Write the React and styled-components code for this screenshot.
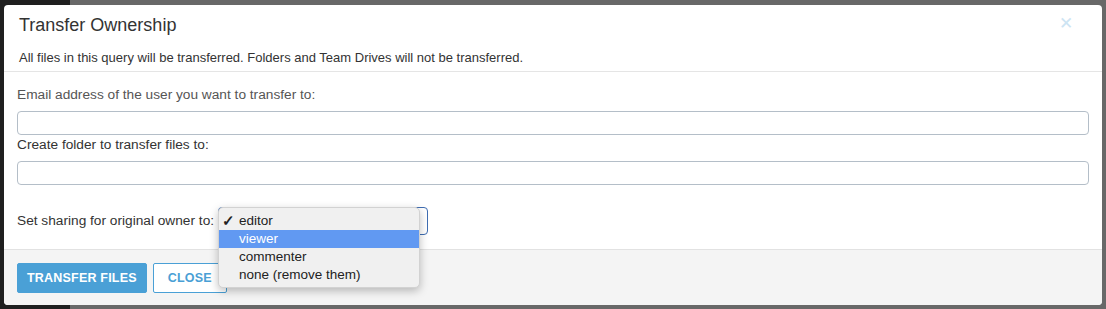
import React from 'react'
import styled, { createGlobalStyle } from 'styled-components'

const GlobalStyle = createGlobalStyle`
    html, body {
        margin: 0;
        padding: 0;
        height: 309px;
        overflow: hidden;
        font-family: 'Liberation Sans', Arial, sans-serif;
        background: linear-gradient(to right, #1f1f1f 0 70px, #686868 70px);
    }
    * { box-sizing: border-box; }
`;

const Backdrop = styled.div`
    width: 1106px;
    height: 309px;
    padding: 5px 4px 4px 4px;
`;

const Modal = styled.div`
    width: 1098px;
    height: 300px;
    background: #fff;
    border-radius: 4px;
    display: flex;
    flex-direction: column;
    position: relative;
`;

const Header = styled.div`
    padding: 9px 15px 0 15px;
    height: 67px;
    border-bottom: 1px solid #e5e5e5;
    position: relative;
`;

const Title = styled.h4`
    margin: 0;
    font-size: 18px;
    font-weight: 400;
    color: #333;
    line-height: 22px;
`;

const Note = styled.p`
    margin: 12px 0 0 0;
    font-size: 13px;
    color: #333;
    line-height: 20px;
`;

const CloseX = styled.button`
    position: absolute;
    top: 8px;
    right: 29px;
    border: 0;
    background: none;
    color: #cde4f3;
    font-size: 17px;
    padding: 0;
    font-family: 'Liberation Sans', Arial, sans-serif;
`;

const Body = styled.div`
    flex: 1;
    padding: 13px 13px 0 13px;
    display: flex;
    flex-direction: column;
`;

const Label = styled.label`
    font-size: 13.7px;
    line-height: 20px;
    color: ${p => p.muted ? '#555' : '#333'};
    margin-bottom: ${p => p.gap}px;
`;

const Input = styled.div`
    height: 24px;
    width: 1072px;
    border: 1px solid #b4bec8;
    border-radius: 4px;
`;

const SelectRow = styled.div`
    display: flex;
    align-items: center;
    margin-top: 22px;
    position: relative;
`;

const SelectBox = styled.div`
    margin-left: 4px;
    width: 210px;
    height: 28px;
    border: 1.5px solid #3f6db2;
    border-radius: 4px;
`;

const Menu = styled.ul`
    position: absolute;
    left: 201px;
    top: 0;
    width: 202px;
    margin: 0;
    padding: 4px 0 3px 0;
    list-style: none;
    background: #f0f0f0;
    border-radius: 5px;
    border: 1px solid #d2d2d2;
    box-shadow: 0 3px 8px rgba(0, 0, 0, 0.25);
    z-index: 5;
`;

const Item = styled.li`
    height: 18px;
    line-height: 18px;
    font-size: 13.5px;
    color: ${p => p.active ? '#fff' : '#222'};
    background: ${p => p.active ? '#6199f2' : 'transparent'};
    padding-left: 20px;
    position: relative;
`;

const Check = styled.span`
    position: absolute;
    left: 3px;
    top: 0;
    font-size: 15px;
    font-weight: 700;
`;

const Footer = styled.div`
    height: 56px;
    background: #f4f4f4;
    border-top: 1px solid #e2e2e2;
    border-radius: 0 0 4px 4px;
    display: flex;
    align-items: flex-start;
    gap: 6px;
    padding: 13px 13px 0 13px;
`;

const Button = styled.button`
    height: 30px;
    padding: 0 ${p => p.primary ? 9 : 14}px;
    font-family: 'Liberation Sans', Arial, sans-serif;
    font-size: 12.5px;
    font-weight: 700;
    letter-spacing: 0.2px;
    border-radius: 2px;
    border: 1px solid #4aa0d6;
    background: ${p => p.primary ? '#4aa0d6' : '#fff'};
    color: ${p => p.primary ? '#fff' : '#4a9fd5'};
`;

export default function App(){
    const options = ['editor', 'viewer', 'commenter', 'none (remove them)']
    return (
        <Backdrop>
            <GlobalStyle />
            <Modal>
                <Header>
                    <Title>Transfer Ownership</Title>
                    <Note>All files in this query will be transferred. Folders and Team Drives will not be transferred.</Note>
                    <CloseX>✕</CloseX>
                </Header>
                <Body>
                    <Label muted gap={6}>Email address of the user you want to transfer to:</Label>
                    <Input />
                    <Label gap={6}>Create folder to transfer files to:</Label>
                    <Input />
                    <SelectRow>
                        <Label gap={0}>Set sharing for original owner to:</Label>
                        <SelectBox />
                        <Menu>
                            {options.map((o, i) => (
                                <Item key={o} active={i === 1}>
                                    {i === 0 && <Check>✓</Check>}
                                    {o}
                                </Item>
                            ))}
                        </Menu>
                    </SelectRow>
                </Body>
                <Footer>
                    <Button primary>TRANSFER FILES</Button>
                    <Button>CLOSE</Button>
                </Footer>
            </Modal>
        </Backdrop>
    )
}
